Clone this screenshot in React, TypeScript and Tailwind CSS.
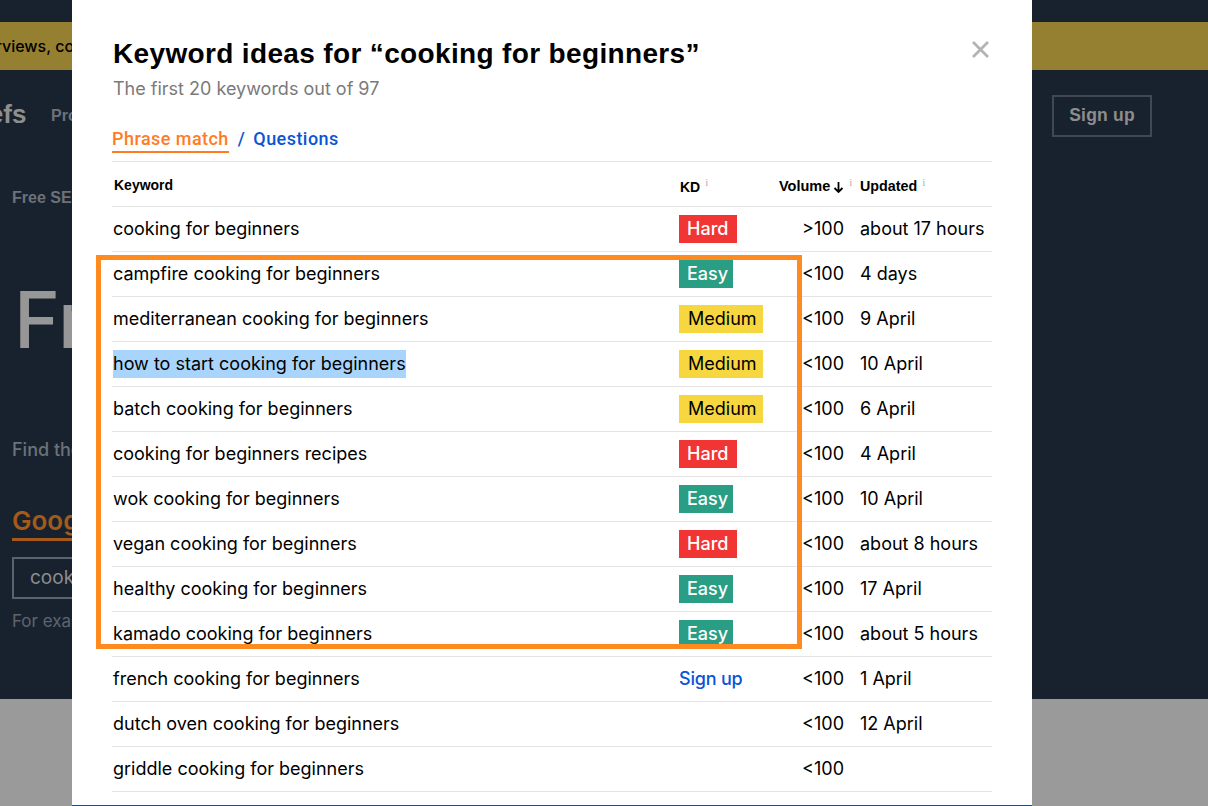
const rows: [string, string, string, string][] = [
  ["cooking for beginners", "Hard", ">100", "about 17 hours"],
  ["campfire cooking for beginners", "Easy", "<100", "4 days"],
  ["mediterranean cooking for beginners", "Medium", "<100", "9 April"],
  ["how to start cooking for beginners", "Medium", "<100", "10 April"],
  ["batch cooking for beginners", "Medium", "<100", "6 April"],
  ["cooking for beginners recipes", "Hard", "<100", "4 April"],
  ["wok cooking for beginners", "Easy", "<100", "10 April"],
  ["vegan cooking for beginners", "Hard", "<100", "about 8 hours"],
  ["healthy cooking for beginners", "Easy", "<100", "17 April"],
  ["kamado cooking for beginners", "Easy", "<100", "about 5 hours"],
  ["french cooking for beginners", "Sign up", "<100", "1 April"],
  ["dutch oven cooking for beginners", "", "<100", "12 April"],
  ["griddle cooking for beginners", "", "<100", ""],
];

function Kd({ v }: { v: string }) {
  if (v === "Hard") return <span className="ml-px inline-block h-7 w-[58px] bg-[#f13535] pl-[8px] font-medium leading-7 text-white">Hard</span>;
  if (v === "Easy") return <span className="ml-px inline-block h-7 w-[54px] bg-[#299e85] pl-[8px] font-medium leading-7 text-white">Easy</span>;
  if (v === "Medium") return <span className="ml-px inline-block h-7 w-[84px] bg-[#f6d73f] pl-[9px] font-normal leading-7 text-black">Medium</span>;
  if (v === "Sign up") return <span className="relative -top-px pl-px font-medium tracking-[-0.2px] text-[#0b54d6]">Sign up</span>;
  return null;
}

function Info() {
  return <sup className="ml-[5px] font-['Liberation_Serif',serif] text-[11px] font-normal text-[#b0b0b0]">i</sup>;
}

const grid = "grid grid-cols-[566px_92px_74px_16px_132px] items-center";

export default function App() {
  return (
    <div className="relative h-[806px] w-[1208px] overflow-hidden bg-[#9a9a9a] font-['Inter',sans-serif]">
      <div className="h-[699px] overflow-hidden bg-[#18222f] pt-[22px]">
        <div className="flex h-12 items-center overflow-hidden whitespace-nowrap bg-[#948030] text-[16px] font-medium text-black">
          <span className="-ml-[55px]">AI Overviews, content</span>
        </div>
        <div className="flex h-[89px] items-center justify-between pr-[56px] pt-[2px] font-['Liberation_Sans',sans-serif] font-bold">
          <div className="flex items-center whitespace-nowrap">
            <span className="relative -top-px -ml-[56px] w-[107px] text-[26px] text-[#8f8f8f]">Ahrefs</span>
            <span className="text-[16px] text-[#6d7178]">Products</span>
          </div>
          <span className="flex h-[42px] w-[100px] items-center justify-center border-2 border-[#3f4854] text-[17.5px] tracking-[0.2px] text-[#8d8d8d]">Sign up</span>
        </div>
        <div className="pl-3 pt-[27px] font-['Liberation_Sans',sans-serif] text-[16px] font-bold leading-6 text-[#6d7178]">Free SEO Tools</div>
        <div className="whitespace-nowrap pl-[14px] pt-[62px] text-[78px] font-medium leading-[96px] text-[#979797]">Free Keyword</div>
        <div className="whitespace-nowrap pl-3 pt-[70px] text-[18px] font-medium leading-6 text-[#6d7178]">Find the best keywords</div>
        <div className="pl-3 pt-[43px] text-[26px] font-semibold leading-[32px] text-[#a5591a]">
          <span className="inline-block h-[36px] border-b-[3px] border-[#a5591a]">Google keywords</span>
        </div>
        <div className="ml-3 mt-[16px] flex h-[42px] w-[300px] items-center border-2 border-[#5a626d] pl-4 text-[19px] text-[#8d8d8d]">cooking</div>
        <div className="pl-3 pt-[10px] text-[17px] leading-6 text-[#5f646c]">For example</div>
      </div>

      <div className="absolute left-[72px] top-0 h-[806px] w-[960px] border-b border-[#1748a8] bg-white px-10 text-[18px] text-black">
        <div className="relative pl-px pt-[36px] font-['Liberation_Sans',sans-serif] text-[28px] font-bold leading-9 tracking-[0.35px]">
          Keyword ideas for “cooking for beginners”
          <svg className="absolute right-[3px] top-[41px] h-[17px] w-[17px]" viewBox="0 0 17 17" fill="none" stroke="#b3b3b3" strokeWidth="2.8">
            <path d="M1 1l15 15M16 1L1 16" />
          </svg>
        </div>
        <div className="pl-px pt-[5px] text-[18px] leading-6 text-[#7a7a7a]">The first 20 keywords out of 97</div>
        <div className="flex h-[60px] items-start pt-[26px] font-['Roboto',sans-serif] text-[18px] font-medium leading-[24px] tracking-[0.45px]">
          <span className="border-b-2 border-[#ff7c24] text-[#ff7c24]">Phrase match</span>
          <span className="ml-[9px] text-[#0b54d6]">/</span>
          <span className="ml-[8px] text-[#0b54d6]">Questions</span>
        </div>
        <div className={`${grid} h-[46px] border-y border-[#e4e4e4] font-['Liberation_Sans',sans-serif] text-[14px] font-bold`}>
          <span className="relative top-[1px] pl-[2px]">Keyword</span>
          <span className="relative top-[3px] pl-[2px]">KD<Info /></span>
          <span className="relative top-[3px] ml-[9px] flex items-baseline whitespace-nowrap text-[14.5px]">
            Volume
            <svg className="relative top-[2px] ml-[3px] h-[11px] w-[11px] shrink-0" viewBox="0 0 11 11" fill="none" stroke="#000" strokeWidth="1.8">
              <path d="M5.5 0v10M1.5 6l4 4 4-4" />
            </svg>
            <Info />
          </span>
          <span />
          <span className="relative top-[3px] text-[14.3px]">Updated<Info /></span>
        </div>
        {rows.map((r) => (
          <div key={r[0]} className={`${grid} h-[45px] border-b border-[#e4e4e4]`}>
            {r[0].startsWith("how") ? (
              <span className="pl-px"><span className="inline-block h-7 bg-[#a9d4fb] leading-7">{r[0]}</span></span>
            ) : (
              <span className="pb-[2px] pl-px">{r[0]}</span>
            )}
            <span><Kd v={r[1]} /></span>
            <span className="pb-[2px] text-right">{r[2]}</span>
            <span />
            <span className="pb-[2px]">{r[3]}</span>
          </div>
        ))}
      </div>

      <div className="absolute left-[96px] top-[255px] h-[394px] w-[706px] border-[5px] border-[#ff8a20]" />
    </div>
  );
}
